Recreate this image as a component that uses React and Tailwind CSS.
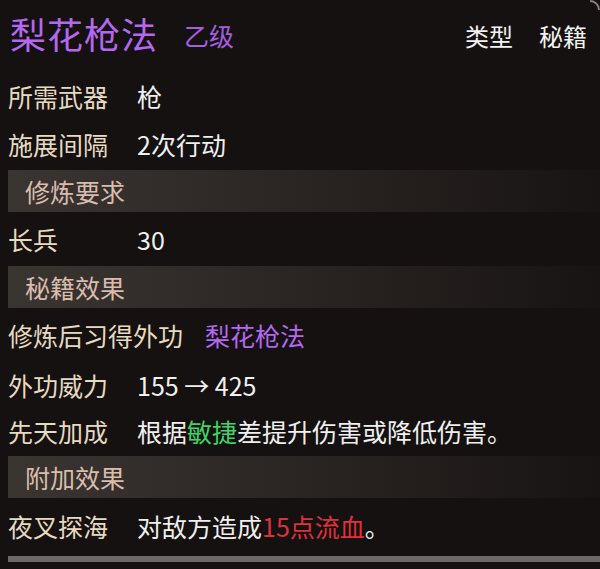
import React from 'react';

const font = { fontFamily: '"Noto Sans CJK SC", "Noto Sans", sans-serif' };

function Row({ label, children, className = 'h-[48px]' }) {
  return (
    <div className={`flex items-center pl-[8px] ${className}`}>
      <span className="w-[129px] shrink-0 text-[#e6dac0]">{label}</span>
      <span className="text-[#efefef]">{children}</span>
    </div>
  );
}

function Band({ title }) {
  return (
    <div className="ml-[8px] h-[42px] flex items-center pl-[17px] bg-gradient-to-r from-[#3b3532] via-[#2a2523] to-[#181413]">
      <span className="text-[#d9bcae]">{title}</span>
    </div>
  );
}

export default function App() {
  return (
    <div
      className="w-[600px] h-[569px] overflow-hidden bg-[#151110] text-[25px] leading-none relative"
      style={font}
    >
      <div className="absolute top-0 right-0 w-[10px] h-[10px] rounded-tr-[10px] border-t-2 border-r-2 border-[#8a8580]" />

      {/* header */}
      <div className="h-[72px] flex items-center pl-[10px] pr-[13px] pb-[6px]">
        <span className="text-[36px] text-[#b468f0] tracking-[1px]">梨花枪法</span>
        <span className="ml-[26px] mt-[4px] text-[25px] text-[#a45ee0]">乙级</span>
        <div className="ml-auto flex gap-[26px] mt-[6px] text-[24px] text-[#f2f2f2]">
          <span>类型</span>
          <span>秘籍</span>
        </div>
      </div>

      <Row label="所需武器">枪</Row>
      <Row label="施展间隔" className="h-[48px] mb-[2px]">2次行动</Row>

      <Band title="修炼要求" />
      <Row label="长兵" className="h-[54px]">30</Row>

      <Band title="秘籍效果" />
      <div className="flex items-center pl-[8px] h-[54px]">
        <span className="text-[#e6dac0]">修炼后习得外功</span>
        <span className="ml-[22px] text-[#b468f0]">梨花枪法</span>
      </div>
      <Row label="外功威力" className="h-[46px]">155 → 425</Row>
      <Row label="先天加成" className="h-[46px] mb-[2px]">
        根据<span className="text-[#3fd46a]">敏捷</span>差提升伤害或降低伤害。
      </Row>

      <Band title="附加效果" />
      <Row label="夜叉探海" className="h-[56px]">
        对敌方造成<span className="text-[#e0303a]">15点流血</span>。
      </Row>

      <div className="mt-[2px] ml-[8px] h-[6px] bg-[#6b6865]" />
    </div>
  );
}
